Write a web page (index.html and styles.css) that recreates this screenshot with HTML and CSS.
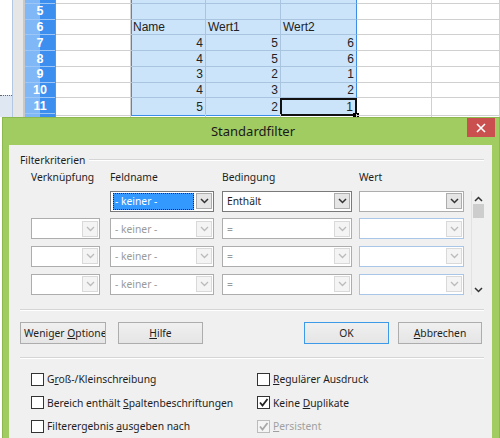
FILE: index.html
```html
<!DOCTYPE html>
<html>
<head>
<meta charset="utf-8">
<link rel="stylesheet" href="styles.css">
</head>
<body>
<div class="sheet">
  <div class="lpane"><div class="lpane-bottom"></div></div>
  <div class="vstrip"></div>
  <div class="rowhdr">
    <div class="rh r0">4</div>
    <div class="rh">5</div>
    <div class="rh">6</div>
    <div class="rh">7</div>
    <div class="rh">8</div>
    <div class="rh">9</div>
    <div class="rh">10</div>
    <div class="rh">11</div>
    <div class="rh rl"></div>
  </div>
  <div class="cells">
    <div class="row r0"><div class="c"></div><div class="c sel sl"></div><div class="c sel"></div><div class="c sel sr"></div><div class="c"></div><div class="c"></div></div>
    <div class="row"><div class="c"></div><div class="c sel sl"></div><div class="c sel"></div><div class="c sel sr"></div><div class="c"></div><div class="c"></div></div>
    <div class="row"><div class="c"></div><div class="c sel sl t">Name</div><div class="c sel t">Wert1</div><div class="c sel sr t">Wert2</div><div class="c"></div><div class="c"></div></div>
    <div class="row"><div class="c"></div><div class="c sel sl n">4</div><div class="c sel n">5</div><div class="c sel sr n">6</div><div class="c"></div><div class="c"></div></div>
    <div class="row"><div class="c"></div><div class="c sel sl n">4</div><div class="c sel n">5</div><div class="c sel sr n">6</div><div class="c"></div><div class="c"></div></div>
    <div class="row"><div class="c"></div><div class="c sel sl n">3</div><div class="c sel n">2</div><div class="c sel sr n">1</div><div class="c"></div><div class="c"></div></div>
    <div class="row"><div class="c"></div><div class="c sel sl n">4</div><div class="c sel n">3</div><div class="c sel sr n">2</div><div class="c"></div><div class="c"></div></div>
    <div class="row"><div class="c"></div><div class="c sel sl sb n">5</div><div class="c sel sb n">2</div><div class="c sel active n">1<span class="handle"></span></div><div class="c"></div><div class="c"></div></div>
    <div class="row rl"><div class="c"></div><div class="c"></div><div class="c"></div><div class="c"></div><div class="c"></div><div class="c"></div></div>
  </div>
</div>

<div class="dialog">
  <div class="titlebar">
    <span></span>
    <span class="title">Standardfilter</span>
    <span class="close"><svg width="10" height="10" viewBox="0 0 10 10"><path d="M1 1L9 9M9 1L1 9" stroke="#fff" stroke-width="1.6"/></svg></span>
  </div>
  <div class="content">
    <div class="group-head"><span>Filterkriterien</span><span class="gline"></span></div>
    <div class="crit">
      <div class="hd">Verknüpfung</div>
      <div class="hd">Feldname</div>
      <div class="hd">Bedingung</div>
      <div class="hd">Wert</div>
      <div class="hd"></div>

      <div></div>
      <div class="combo w2 focus"><span class="val hl">- keiner -</span><span class="btn"><svg width="9" height="6" viewBox="0 0 9 6"><path d="M1 1L4.5 4.5L8 1" fill="none" stroke="#333" stroke-width="1.5"/></svg></span></div>
      <div class="combo w3 dark"><span class="val">Enthält</span><span class="btn"><svg width="9" height="6" viewBox="0 0 9 6"><path d="M1 1L4.5 4.5L8 1" fill="none" stroke="#333" stroke-width="1.5"/></svg></span></div>
      <div class="combo w4"><span class="val"></span><span class="btn"><svg width="9" height="6" viewBox="0 0 9 6"><path d="M1 1L4.5 4.5L8 1" fill="none" stroke="#333" stroke-width="1.5"/></svg></span></div>
      <div class="scroll">
        <svg class="sarrow" width="9" height="6" viewBox="0 0 9 6"><path d="M1 5L4.5 1.5L8 5" fill="none" stroke="#333" stroke-width="1.5"/></svg>
        <div class="thumb"></div>
        <div class="sfill"></div>
        <svg class="sarrow" width="9" height="6" viewBox="0 0 9 6"><path d="M1 1L4.5 4.5L8 1" fill="none" stroke="#333" stroke-width="1.5"/></svg>
      </div>

      <div class="combo w1 dis"><span class="val"></span><span class="btn"><svg width="9" height="6" viewBox="0 0 9 6"><path d="M1 1L4.5 4.5L8 1" fill="none" stroke="#bbb" stroke-width="1.3"/></svg></span></div>
      <div class="combo w2 dis"><span class="val">- keiner -</span><span class="btn"><svg width="9" height="6" viewBox="0 0 9 6"><path d="M1 1L4.5 4.5L8 1" fill="none" stroke="#bbb" stroke-width="1.3"/></svg></span></div>
      <div class="combo w3 dis"><span class="val">=</span><span class="btn"><svg width="9" height="6" viewBox="0 0 9 6"><path d="M1 1L4.5 4.5L8 1" fill="none" stroke="#bbb" stroke-width="1.3"/></svg></span></div>
      <div class="combo w4 dis blue"><span class="val"></span><span class="btn"><svg width="9" height="6" viewBox="0 0 9 6"><path d="M1 1L4.5 4.5L8 1" fill="none" stroke="#bbb" stroke-width="1.3"/></svg></span></div>

      <div class="combo w1 dis"><span class="val"></span><span class="btn"><svg width="9" height="6" viewBox="0 0 9 6"><path d="M1 1L4.5 4.5L8 1" fill="none" stroke="#bbb" stroke-width="1.3"/></svg></span></div>
      <div class="combo w2 dis"><span class="val">- keiner -</span><span class="btn"><svg width="9" height="6" viewBox="0 0 9 6"><path d="M1 1L4.5 4.5L8 1" fill="none" stroke="#bbb" stroke-width="1.3"/></svg></span></div>
      <div class="combo w3 dis"><span class="val">=</span><span class="btn"><svg width="9" height="6" viewBox="0 0 9 6"><path d="M1 1L4.5 4.5L8 1" fill="none" stroke="#bbb" stroke-width="1.3"/></svg></span></div>
      <div class="combo w4 dis blue"><span class="val"></span><span class="btn"><svg width="9" height="6" viewBox="0 0 9 6"><path d="M1 1L4.5 4.5L8 1" fill="none" stroke="#bbb" stroke-width="1.3"/></svg></span></div>

      <div class="combo w1 dis"><span class="val"></span><span class="btn"><svg width="9" height="6" viewBox="0 0 9 6"><path d="M1 1L4.5 4.5L8 1" fill="none" stroke="#bbb" stroke-width="1.3"/></svg></span></div>
      <div class="combo w2 dis"><span class="val">- keiner -</span><span class="btn"><svg width="9" height="6" viewBox="0 0 9 6"><path d="M1 1L4.5 4.5L8 1" fill="none" stroke="#bbb" stroke-width="1.3"/></svg></span></div>
      <div class="combo w3 dis"><span class="val">=</span><span class="btn"><svg width="9" height="6" viewBox="0 0 9 6"><path d="M1 1L4.5 4.5L8 1" fill="none" stroke="#bbb" stroke-width="1.3"/></svg></span></div>
      <div class="combo w4 dis blue"><span class="val"></span><span class="btn"><svg width="9" height="6" viewBox="0 0 9 6"><path d="M1 1L4.5 4.5L8 1" fill="none" stroke="#bbb" stroke-width="1.3"/></svg></span></div>
    </div>
    <div class="sep sep1"></div>
    <div class="buttons">
      <div class="button b-less"><span>Weniger <u>O</u>ptionen</span></div>
      <div class="button b-help"><span><u>H</u>ilfe</span></div>
      <div class="button b-ok"><span>OK</span></div>
      <div class="button b-cancel"><span><u>A</u>bbrechen</span></div>
    </div>
    <div class="sep sep2"></div>
    <div class="checks">
      <div class="chk"><span class="box"></span><span>G<u>r</u>oß-/Kleinschreibung</span></div>
      <div class="chk"><span class="box"></span><span><u>R</u>egulärer Ausdruck</span></div>
      <div class="chk"><span class="box"></span><span>Bereich enthält <u>S</u>paltenbeschriftungen</span></div>
      <div class="chk"><span class="box"><svg width="11" height="11" viewBox="0 0 11 11"><path d="M2 5.5L4.5 8.5L9.5 2" fill="none" stroke="#222" stroke-width="1.8"/></svg></span><span>Keine <u>D</u>uplikate</span></div>
      <div class="chk"><span class="box"></span><span>Filterergebnis <u>a</u>usgeben nach</span></div>
      <div class="chk disabled"><span class="box dbox"><svg width="11" height="11" viewBox="0 0 11 11"><path d="M2 5.5L4.5 8.5L9.5 2" fill="none" stroke="#a8a8a8" stroke-width="1.8"/></svg></span><span><u>P</u>ersistent</span></div>
    </div>
  </div>
</div>
</body>
</html>
```

FILE: styles.css
```css
html, body {
  margin: 0;
  padding: 0;
  width: 500px;
  height: 438px;
  overflow: hidden;
  background: #fff;
}

.sheet {
  display: flex;
  height: 117px;
  overflow: hidden;
  font-family: "Liberation Sans", Arial, sans-serif;
  font-size: 12px;
  color: #222;
}

.lpane {
  width: 12px;
  display: flex;
  flex-direction: column;
  background: #fff;
}

.lpane-bottom {
  margin-top: auto;
  height: 21px;
  background: #dfe7f2;
  border-top: 1px dotted #666;
}

.vstrip {
  width: 10px;
  background: #e6e6e6;
  border-left: 1px solid #b3c8e0;
  border-right: 2px solid #c9c9c9;
}

.rowhdr {
  width: 30px;
  border-right: 1px solid #8c8c8c;
  display: flex;
  flex-direction: column;
}

.rh {
  height: 15.72px;
  box-sizing: border-box;
  border-bottom: 1px solid #9cc6f6;
  background: linear-gradient(to right, #80b7f6 0, #80b7f6 50%, #3d8fef 50%, #3d8fef 100%);
  color: #fff;
  font-weight: bold;
  font-size: 12.5px;
  display: flex;
  align-items: center;
  justify-content: center;
  flex: none;
}

.rh.r0 {
  height: 4px;
  overflow: hidden;
  align-items: flex-end;
}

.rh.rl {
  height: 10px;
}

.cells {
  flex: 1;
  display: flex;
  flex-direction: column;
}

.row {
  display: grid;
  grid-template-columns: 75px 75px 75px 76px 75px 1fr;
  height: 15.72px;
  flex: none;
}

.row.r0 {
  height: 4px;
}

.row.rl {
  height: 10px;
}

.c {
  box-sizing: border-box;
  border-right: 1px solid #d0d0d0;
  border-bottom: 1px solid #d0d0d0;
  display: flex;
  align-items: center;
  padding: 0 2px;
  overflow: visible;
  position: relative;
}

.c.sel {
  background: #cce4f9;
  border-right-color: #a9c4de;
  border-bottom-color: #a9c4de;
}

.c.sl {
  box-shadow: inset 1px 0 0 #3a8ee8;
}

.c.sr {
  border-right-color: #3a8ee8;
}

.c.sb {
  border-bottom-color: #3a8ee8;
}

.c.active {
  border: 2px solid #111;
  background: #cce4f9;
  margin-left: -1px;
}

.c.n {
  justify-content: flex-end;
}

.handle {
  position: absolute;
  right: -4px;
  bottom: -5px;
  width: 6px;
  height: 6px;
  background: #000;
}

/* Dialog */
.dialog {
  margin-left: 2px;
  width: 498px;
  height: 330px;
  box-sizing: border-box;
  background: #a1cc61;
  border: 1px solid #8db84f;
  border-bottom: none;
  display: flex;
  flex-direction: column;
  font-family: "Noto Sans", "Open Sans", sans-serif;
  font-size: 10.3px;
  color: #1e1e1e;
}

.titlebar {
  height: 27px;
  display: grid;
  grid-template-columns: 1fr auto 1fr;
  align-items: start;
  flex: none;
}

.title {
  font-size: 13px;
  color: #1a1a1a;
  line-height: 27px;
  padding-left: 4px;
}

.close {
  justify-self: end;
  margin-right: 4px;
  width: 28px;
  height: 19px;
  background: #c9504f;
  display: flex;
  align-items: center;
  justify-content: center;
}

.content {
  flex: 1;
  margin: 0 7px 0 6px;
  background: #f0f0f0;
  padding: 0 8px 0 11px;
}

.group-head {
  display: flex;
  align-items: center;
  height: 15px;
  margin-top: 7px;
  gap: 4px;
}

.gline {
  flex: 1;
  height: 1px;
  background: #d5d5d5;
  border-bottom: 1px solid #fff;
}

.crit {
  display: grid;
  grid-template-columns: 79px 112px 137px 112px 13px;
  grid-template-rows: 13px 21px 21px 21px 21px;
  row-gap: 6.67px;
  padding-left: 11px;
  margin-top: 4px;
}

.crit .hd {
  line-height: 13px;
}

.combo {
  box-sizing: border-box;
  height: 21px;
  border: 1px solid #adadad;
  background: #fff;
  display: flex;
  align-items: center;
  padding: 1px 1px 1px 2px;
}

.w1 { width: 69px; }
.w2 { width: 104px; }
.w3 { width: 130px; }
.w4 { width: 105px; }

.combo.dark {
  border-color: #7a7a7a;
}

.combo.focus {
  border-color: #7a7a7a;
}

.combo.blue {
  border-color: #a9c6e9;
}

.combo .val {
  flex: 1;
  height: 100%;
  display: flex;
  align-items: center;
  padding-left: 2px;
  white-space: nowrap;
  overflow: hidden;
}

.combo .val.hl {
  background: #3399ff;
  color: #fff;
  outline: 1px dotted #222;
  outline-offset: -1px;
  margin-right: 2px;
}

.combo .btn {
  box-sizing: border-box;
  width: 16px;
  height: 16px;
  border: 1px solid #adadad;
  background: #e5e5e5;
  display: flex;
  align-items: center;
  justify-content: center;
  flex: none;
}

.combo.dis .val {
  color: #9a9a9a;
}

.combo.dis .btn {
  background: #f4f4f4;
  border-color: #d9d9d9;
}

.scroll {
  grid-column: 5;
  grid-row: 2 / span 4;
  display: flex;
  flex-direction: column;
  align-items: center;
  border-left: 1px solid #e2e2e2;
  box-sizing: border-box;
  width: 13px;
}

.sarrow {
  flex: none;
  margin: 5px 0 2px;
}

.thumb {
  width: 11px;
  height: 14px;
  background: #cdcdcd;
  flex: none;
}

.sfill {
  flex: 1;
}

.sep {
  height: 1px;
  background: #d5d5d5;
  border-bottom: 1px solid #fff;
}

.sep1 {
  margin-top: 14px;
}

.buttons {
  display: flex;
  margin-top: 11px;
  height: 22px;
}

.button {
  box-sizing: border-box;
  height: 22px;
  border: 1px solid #adadad;
  background: linear-gradient(#f0f0f0, #e5e5e5);
  display: flex;
  align-items: center;
  justify-content: center;
  overflow: hidden;
  white-space: nowrap;
}

.b-less {
  width: 86px;
  justify-content: flex-start;
  padding-left: 3px;
}

.b-help {
  width: 85px;
  margin-left: 12px;
}

.b-ok {
  width: 85px;
  margin-left: auto;
  border-color: #3c9ae8;
}

.b-cancel {
  width: 84px;
  margin-left: 9px;
  margin-right: 2px;
}

.sep2 {
  margin-top: 13px;
}

.checks {
  display: grid;
  grid-template-columns: 226px 1fr;
  grid-auto-rows: 23.5px;
  padding-left: 11px;
  margin-top: 9px;
}

.chk {
  display: flex;
  align-items: center;
  gap: 2px;
  white-space: nowrap;
}

.chk .box {
  box-sizing: border-box;
  width: 13px;
  height: 13px;
  border: 1px solid #333;
  background: #fff;
  display: flex;
  align-items: center;
  justify-content: center;
  margin-right: 1px;
  flex: none;
}

.chk .dbox {
  border-color: #bcbcbc;
  background: #f4f4f4;
}

.chk.disabled {
  color: #a0a0a0;
}
```
